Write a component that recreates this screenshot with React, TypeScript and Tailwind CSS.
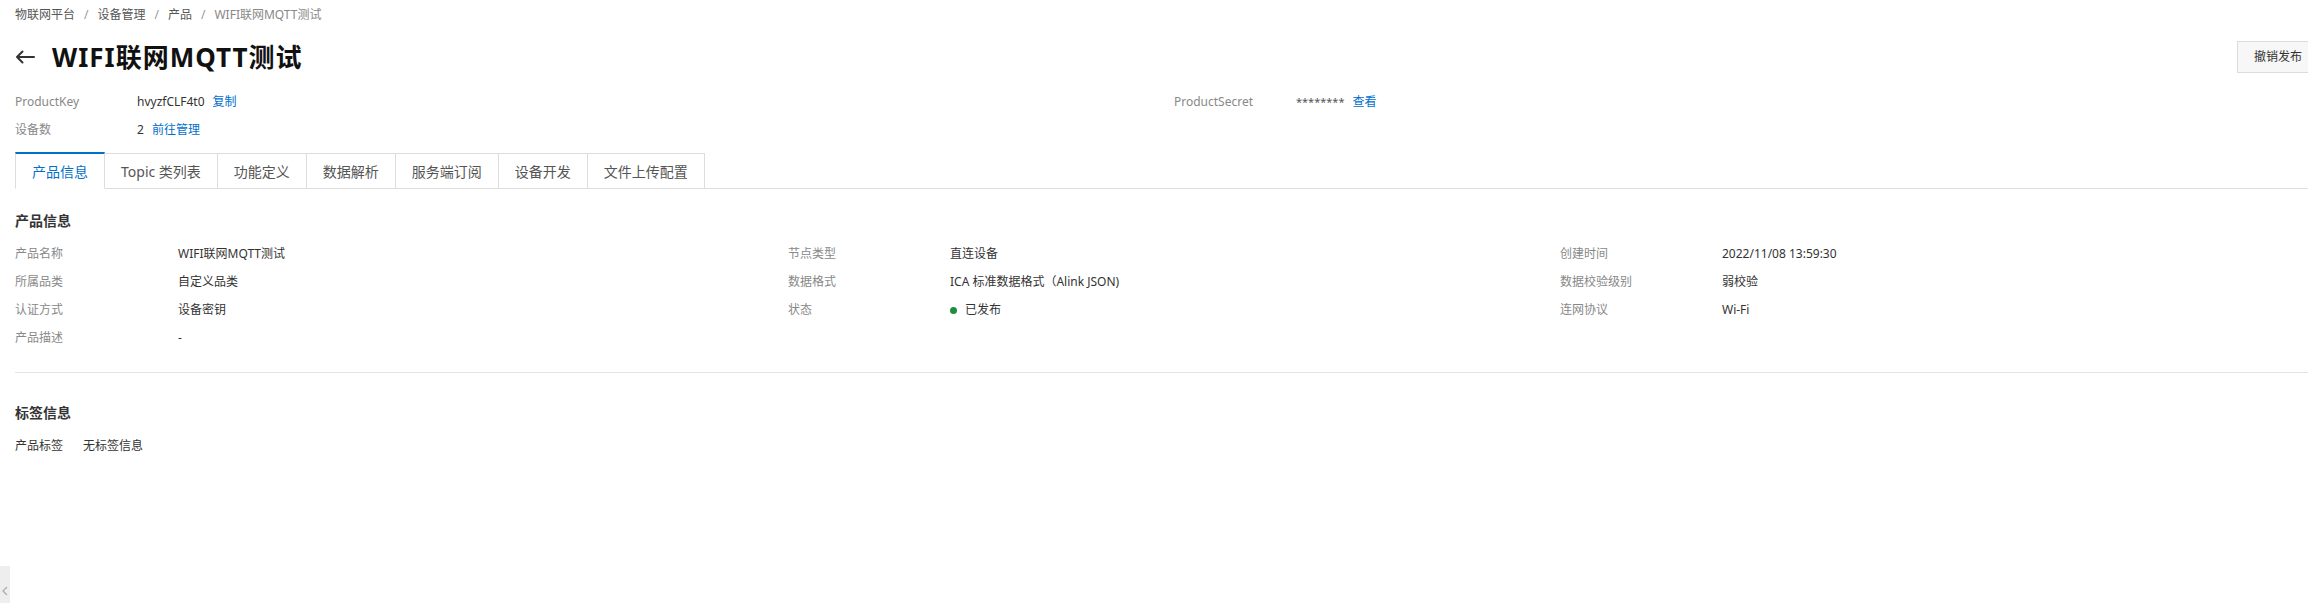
const tabs = ["产品信息", "Topic 类列表", "功能定义", "数据解析", "服务端订阅", "设备开发", "文件上传配置"]

const rows: [string, React.ReactNode, string, React.ReactNode, string, React.ReactNode][] = [
    ["产品名称", "WIFI联网MQTT测试", "节点类型", "直连设备", "创建时间", "2022/11/08 13:59:30"],
    [
        "所属品类", "自定义品类",
        "数据格式", "ICA 标准数据格式（Alink JSON)",
        "数据校验级别", "弱校验",
    ],
    [
        "认证方式", "设备密钥",
        "状态",
        <span className="flex items-center gap-[8px]">
            <span className="w-[7px] h-[7px] rounded-full bg-[#1e8e3e]" />
            已发布
        </span>,
        "连网协议", "Wi-Fi",
    ],
]

const App = () => {
    return (
        <div className="w-full h-[603px] overflow-hidden bg-white relative">
            <div className="w-[2348px] px-[15px] text-[12px] text-[#333] font-['Noto_Sans','Noto_Sans_CJK_SC',sans-serif]">
                {/* breadcrumb */}
                <div className="pt-[5px] h-[25px] leading-[20px] flex items-center text-[#555]">
                    <span>物联网平台</span>
                    <span className="mx-[9px] text-[#999]">/</span>
                    <span>设备管理</span>
                    <span className="mx-[9px] text-[#999]">/</span>
                    <span>产品</span>
                    <span className="mx-[9px] text-[#999]">/</span>
                    <span className="text-[#888]">WIFI联网MQTT测试</span>
                </div>

                {/* title */}
                <div className="mt-[16px] h-[32px] flex items-center justify-between">
                    <div className="flex items-center">
                        <svg width="20" height="14" viewBox="0 0 20 14" fill="none" stroke="#333" strokeWidth="2" strokeLinecap="round" strokeLinejoin="round">
                            <path d="M19 7H2M7.5 1.5L2 7l5.5 5.5" />
                        </svg>
                        <h1 className="ml-[17px] text-[26px] font-bold text-[#111] leading-[32px] tracking-[1px]">WIFI联网MQTT测试</h1>
                    </div>
                    <button className="mr-[14px] h-[32px] px-[16px] bg-[#f7f7f7] border border-[#dcdcdc] text-[#333] text-[12px]">撤销发布</button>
                </div>

                {/* key info */}
                <div className="mt-[19px] grid grid-cols-[122px_1037px_122px_1fr]">
                    <div className="h-[20px] leading-[20px] text-[#888]">ProductKey</div>
                    <div className="h-[20px] leading-[20px] flex gap-[8px]">
                        <span>hvyzfCLF4t0</span>
                        <span className="text-[#0070cc]">复制</span>
                    </div>
                    <div className="h-[20px] leading-[20px] text-[#888]">ProductSecret</div>
                    <div className="h-[20px] leading-[20px] flex gap-[8px]">
                        <span className="text-[#555] text-[11px]">********</span>
                        <span className="text-[#0070cc]">查看</span>
                    </div>
                    <div className="mt-[8px] h-[20px] leading-[20px] text-[#888]">设备数</div>
                    <div className="mt-[8px] h-[20px] leading-[20px] flex gap-[8px] col-span-3">
                        <span>2</span>
                        <span className="text-[#0070cc]">前往管理</span>
                    </div>
                </div>

                {/* tabs */}
                <div className="mt-[12px] flex items-end">
                    {tabs.map((t, i) => (
                        <div
                            key={i}
                            className={
                                i === 0
                                    ? "h-[37px] px-[16px] flex items-center border-t-2 border-t-[#0070cc] border-l border-r border-l-[#ddd] border-r-[#ddd] border-b border-b-white text-[14px] text-[#0070cc]"
                                    : "h-[36px] px-[16px] flex items-center border-t border-r border-b border-[#ddd] text-[14px] text-[#555]"
                            }
                        >
                            {t}
                        </div>
                    ))}
                    <div className="flex-1 h-[36px] border-b border-[#ddd]" />
                </div>

                {/* product info */}
                <h2 className="mt-[22px] h-[20px] leading-[20px] text-[14px] font-bold text-[#333]">产品信息</h2>
                <div className="mt-[9px] grid grid-cols-[163px_610px_162px_610px_162px_1fr]">
                    {rows.map((r, i) => (
                        <div key={i} className="contents">
                            <div className="h-[28px] flex items-center text-[#888]">{r[0]}</div>
                            <div className="h-[28px] flex items-center">{r[1]}</div>
                            <div className="h-[28px] flex items-center text-[#888]">{r[2]}</div>
                            <div className="h-[28px] flex items-center">{r[3]}</div>
                            <div className="h-[28px] flex items-center text-[#888]">{r[4]}</div>
                            <div className="h-[28px] flex items-center">{r[5]}</div>
                        </div>
                    ))}
                    <div className="h-[28px] flex items-center text-[#888]">产品描述</div>
                    <div className="h-[28px] flex items-center">-</div>
                </div>

                <div className="mt-[20px] border-t border-[#e3e3e3]" />

                {/* tags */}
                <h2 className="mt-[30px] h-[20px] leading-[20px] text-[14px] font-bold text-[#333]">标签信息</h2>
                <div className="mt-[13px] h-[20px] leading-[20px] flex">
                    <span className="w-[68px]">产品标签</span>
                    <span>无标签信息</span>
                </div>
            </div>

            {/* sidebar toggle */}
            <div className="absolute left-0 top-[566px] w-[10px] h-[50px] bg-[#eeeeee] flex items-start pt-[20px] justify-center">
                <svg width="6" height="10" viewBox="0 0 6 10" fill="none" stroke="#aaa" strokeWidth="1.2">
                    <path d="M5 1L1 5l4 4" />
                </svg>
            </div>
        </div>
    )
}

export default App
